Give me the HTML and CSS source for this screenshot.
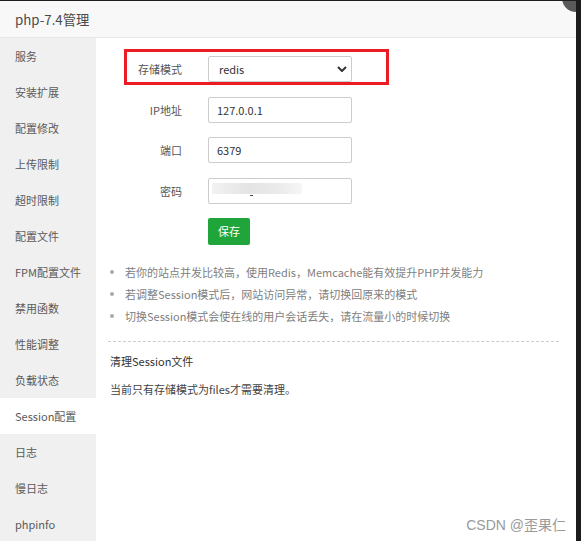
FILE: index.html
```html
<!DOCTYPE html>
<html lang="zh-CN">
<head>
<meta charset="utf-8">
<title>php-7.4管理</title>
<link rel="stylesheet" href="styles.css">
</head>
<body>
<div class="frame">
  <div class="header">
    <span class="title">php-7.4管理</span>
    <span class="close"></span>
  </div>
  <div class="body">
    <ul class="side">
      <li>服务</li>
      <li>安装扩展</li>
      <li>配置修改</li>
      <li>上传限制</li>
      <li>超时限制</li>
      <li>配置文件</li>
      <li>FPM配置文件</li>
      <li>禁用函数</li>
      <li>性能调整</li>
      <li>负载状态</li>
      <li class="active">Session配置</li>
      <li>日志</li>
      <li>慢日志</li>
      <li>phpinfo</li>
    </ul>
    <div class="main">
      <div class="form">
        <div class="row first">
          <label class="lbl">存储模式</label>
          <div class="select-wrap">
            <select class="select"><option>redis</option></select>
            <svg class="chev" width="10" height="6" viewBox="0 0 10 6"><path d="M1 1 L5 5 L9 1" fill="none" stroke="#333" stroke-width="2"/></svg>
          </div>
          <span class="mark"></span>
        </div>
        <div class="row">
          <label class="lbl">IP地址</label>
          <input class="input" value="127.0.0.1">
        </div>
        <div class="row">
          <label class="lbl">端口</label>
          <input class="input" value="6379">
        </div>
        <div class="row">
          <label class="lbl">密码</label>
          <div class="input masked"><span class="blur"></span><span class="dash"></span></div>
        </div>
        <div class="row">
          <span class="lbl"></span>
          <button class="btn">保存</button>
        </div>
      </div>
      <ul class="tips">
        <li>若你的站点并发比较高，使用Redis，Memcache能有效提升PHP并发能力</li>
        <li>若调整Session模式后，网站访问异常，请切换回原来的模式</li>
        <li>切换Session模式会使在线的用户会话丢失，请在流量小的时候切换</li>
      </ul>
      <div class="clean">
        <div class="clean-title">清理Session文件</div>
        <div class="clean-desc">当前只有存储模式为files才需要清理。</div>
      </div>
    </div>
  </div>
  <div class="watermark">CSDN @歪果仁</div>
</div>
</body>
</html>
```
FILE: styles.css
```css
* { box-sizing: border-box; }
html, body { margin: 0; padding: 0; background: #fff; }
body {
  font-family: "Noto Sans CJK SC", "Noto Sans", sans-serif;
  font-size: 11px;
  color: #555;
}
.frame {
  position: relative;
  width: 581px;
  height: 541px;
  overflow: hidden;
  border-top: 1px solid #1e1e1e;
  background: #fff;
}
.frame::after {
  content: "";
  position: absolute;
  top: 0; right: 0; bottom: 0;
  width: 5px;
  background: #1c1c1c;
}
.header {
  position: relative;
  height: 37px;
  padding-left: 15px;
  background: #f8f8f8;
  border-bottom: 1px solid #e8e8e8;
  display: flex;
  align-items: center;
}
.title { font-size: 13.3px; color: #4a4a4a; }
.close {
  position: absolute;
  right: -9px;
  top: -17px;
  width: 28px;
  height: 28px;
  border-radius: 50%;
  background: #5a5a5a;
}
.body { display: flex; height: 503px; }
.side {
  list-style: none;
  margin: 0;
  padding: 0;
  width: 96px;
  flex: none;
  background: #f0f0f0;
}
.side li {
  height: 36px;
  line-height: 36px;
  padding-left: 15px;
  color: #5a5a5a;
  white-space: nowrap;
}
.side li.active { background: #fff; }
.main {
  flex: 1;
  padding: 18px 22px 0 12px;
}
.form { display: flex; flex-direction: column; gap: 14.5px; }
.row {
  position: relative;
  display: flex;
  align-items: center;
  height: 26px;
}
.lbl {
  width: 74px;
  text-align: right;
  margin-right: 26px;
  color: #555;
}
.select-wrap { position: relative; width: 144px; height: 26px; }
.select {
  appearance: none;
  -webkit-appearance: none;
  width: 100%;
  height: 26px;
  border: 1px solid #ccc;
  border-radius: 2px;
  background: #fff;
  padding: 0 10px;
  font: inherit;
  font-size: 11px;
  color: #333;
  outline: none;
}
.chev { position: absolute; right: 5px; top: 10px; }
.mark {
  position: absolute;
  left: 16px;
  top: -7px;
  width: 265px;
  height: 36px;
  border: 3px solid #ec1c24;
  pointer-events: none;
}
.input {
  width: 144px;
  height: 26px;
  border: 1px solid #ccc;
  border-radius: 2px;
  padding: 0 8px;
  font: inherit;
  font-size: 11px;
  color: #333;
  background: #fff;
  outline: none;
}
.masked { position: relative; }
.blur {
  position: absolute;
  left: 3px;
  top: 4px;
  width: 90px;
  height: 11px;
  background: linear-gradient(90deg, #f2f2f2, #e4e4e4 40%, #ebebeb 75%, #f6f6f6);
}
.dash {
  position: absolute;
  left: 41px;
  top: 16px;
  width: 3px;
  height: 1px;
  background: #444;
}
.btn {
  width: 42px;
  height: 27px;
  border: 0;
  border-radius: 2px;
  background: #20a53a;
  color: #fff;
  font: inherit;
  font-size: 11px;
  padding: 0;
}
.tips {
  list-style: none;
  margin: 17px 0 0;
  padding: 0 0 0 17px;
  color: #808080;
}
.tips li { position: relative; line-height: 22px; white-space: nowrap; }
.tips li::before {
  content: "";
  position: absolute;
  left: -15px;
  top: 9px;
  width: 4px;
  height: 4px;
  border-radius: 50%;
  background: #aaa;
}
.clean {
  margin-top: 14px;
  border-top: 1px dashed #ccc;
  padding: 9px 0 0 2px;
  color: #333;
}
.clean-title { line-height: 20px; }
.clean-desc { line-height: 20px; margin-top: 8px; color: #444; }
.watermark {
  position: absolute;
  right: 15px;
  bottom: 7px;
  font-family: "Liberation Sans", "Noto Sans CJK SC", sans-serif;
  font-size: 14px;
  color: #9a9a9a;
}
```
